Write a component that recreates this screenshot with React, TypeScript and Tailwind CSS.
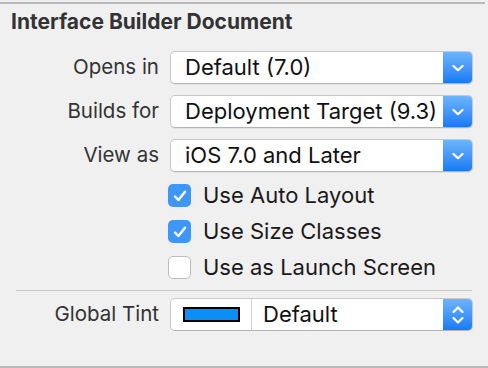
import React from 'react';

const font = { fontFamily: 'Inter, "Noto Sans", sans-serif' };

const Chevron = () => (
  <svg width="14" height="10" viewBox="0 0 14 10" fill="none">
    <path d="M2.5 3 L7 7.2 L11.5 3" stroke="white" strokeWidth="2.2" strokeLinecap="round" strokeLinejoin="round" />
  </svg>
);

const UpDown = () => (
  <svg width="14" height="22" viewBox="0 0 14 22" fill="none">
    <path d="M2.5 8 L7 3.5 L11.5 8" stroke="white" strokeWidth="2.2" strokeLinecap="round" strokeLinejoin="round" />
    <path d="M2.5 14 L7 18.5 L11.5 14" stroke="white" strokeWidth="2.2" strokeLinecap="round" strokeLinejoin="round" />
  </svg>
);

const Popup = ({ value }: { value: string }) => (
  <div className="flex h-[33px] w-[303px] overflow-hidden rounded-[5px] border border-[#c9c9c9] border-b-[#b3b3b3] bg-white shadow-[0_1px_0_rgba(0,0,0,0.06)]">
    <div className="flex flex-1 items-center pl-[14px] text-[22px] text-[#111]">{value}</div>
    <div className="flex w-[29px] items-center justify-center bg-gradient-to-b from-[#6db4fb] to-[#157af6]">
      <Chevron />
    </div>
  </div>
);

const Row = ({ label, children }: { label: string; children: React.ReactNode }) => (
  <div className="flex items-center">
    <div className="w-[159px] text-right text-[20.5px] text-[#333]">{label}</div>
    <div className="ml-[11px]">{children}</div>
  </div>
);

const Check = ({ on, label }: { on: boolean; label: string }) => (
  <div className="ml-[168px] flex h-[23px] items-center gap-[12px]">
    {on ? (
      <div className="flex h-[23px] w-[23px] items-center justify-center rounded-[5px] bg-[#3e97f8]">
        <svg width="16" height="14" viewBox="0 0 16 14" fill="none">
          <path d="M3 7.5 L6.4 11 L13 2.8" stroke="white" strokeWidth="2.4" strokeLinecap="round" strokeLinejoin="round" />
        </svg>
      </div>
    ) : (
      <div className="h-[23px] w-[23px] rounded-[5px] border border-[#bdbdbd] bg-white" />
    )}
    <span className="text-[22px] text-[#1a1a1a]">{label}</span>
  </div>
);

export default function App() {
  return (
    <div className="flex h-[368px] w-[488px] flex-col overflow-hidden bg-[#f0f0f0]" style={font}>
      <div className="mt-[2px] h-[2px] w-[485px] bg-[#b9b9b9]" />
      <div className="pl-[11px] pt-[4px] text-[21px] font-bold leading-[28px] text-[#333]">
        Interface Builder Document
      </div>
      <div className="mt-[15px] flex flex-col gap-[11px]">
        <Row label="Opens in"><Popup value="Default (7.0)" /></Row>
        <Row label="Builds for"><Popup value="Deployment Target (9.3)" /></Row>
        <Row label="View as"><Popup value="iOS 7.0 and Later" /></Row>
      </div>
      <div className="mt-[12px] flex flex-col gap-[13px]">
        <Check on label="Use Auto Layout" />
        <Check on label="Use Size Classes" />
        <Check on={false} label="Use as Launch Screen" />
      </div>
      <div className="ml-[16px] mt-[11px] h-[1px] w-[456px] bg-[#c8c8c8]" />
      <div className="mt-[7px]">
        <Row label="Global Tint">
          <div className="flex h-[33px] w-[303px] overflow-hidden rounded-[5px] border border-[#c9c9c9] border-b-[#b3b3b3] bg-white">
            <div className="flex w-[81px] items-center justify-center border-r border-[#d0d0d0]">
              <div className="h-[15px] w-[57px] border-2 border-black bg-[#0b8ef5]" />
            </div>
            <div className="flex flex-1 items-center pl-[11px] text-[22px] text-[#111]">Default</div>
            <div className="flex w-[29px] items-center justify-center bg-gradient-to-b from-[#6db4fb] to-[#157af6]">
              <UpDown />
            </div>
          </div>
        </Row>
      </div>
      <div className="mb-0 mt-auto h-[2px] w-full bg-[#b9b9b9]" />
    </div>
  );
}
